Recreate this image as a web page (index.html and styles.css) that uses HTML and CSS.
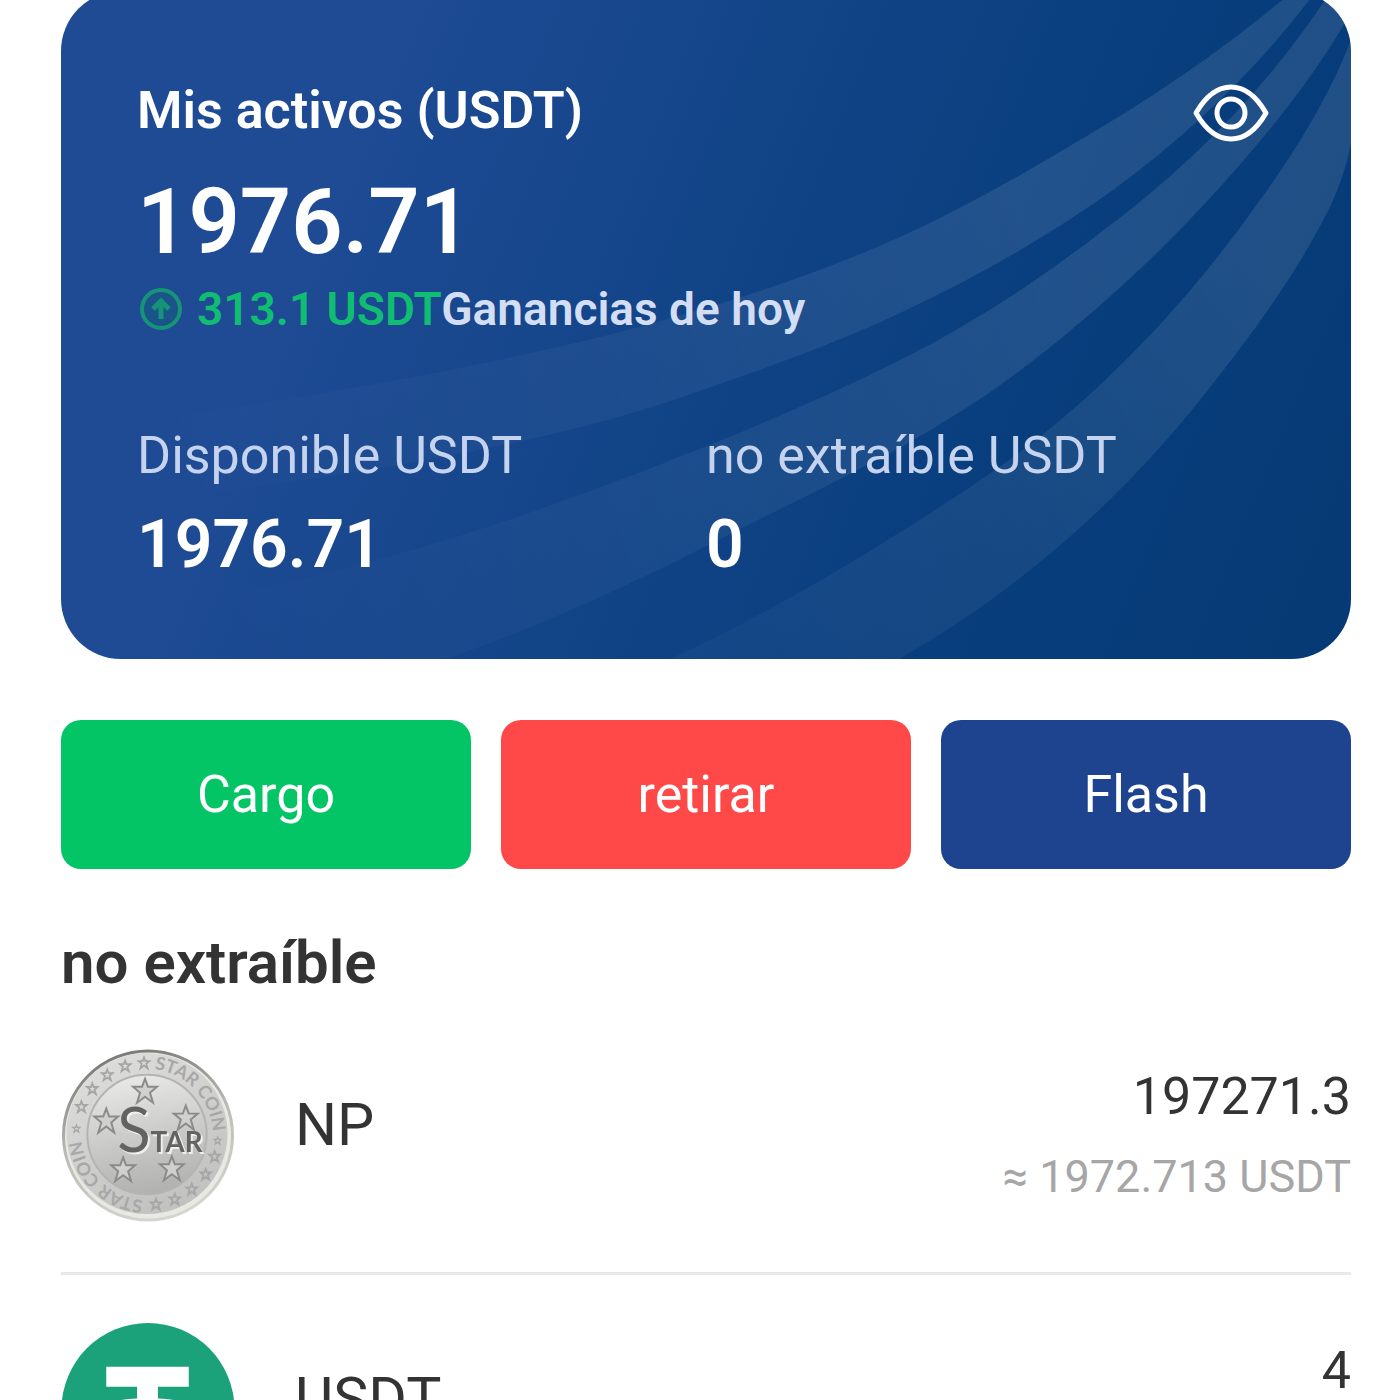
FILE: index.html
```html
<!DOCTYPE html>
<html lang="es">
<head>
<meta charset="utf-8">
<meta name="viewport" content="width=device-width, initial-scale=1">
<title>Mis activos</title>
<link rel="stylesheet" href="styles.css">
</head>
<body>
<main class="page">
  <section class="card">
    <svg class="card-art" viewBox="61 -9 1290 668" preserveAspectRatio="none" aria-hidden="true">
      <defs>
        <linearGradient id="fade" gradientUnits="userSpaceOnUse" x1="200" y1="560" x2="1050" y2="250">
          <stop offset="0" stop-color="#fff" stop-opacity="0"/>
          <stop offset=".4" stop-color="#fff" stop-opacity=".035"/>
          <stop offset="1" stop-color="#fff" stop-opacity=".1"/>
        </linearGradient>
        <linearGradient id="fade-low" gradientUnits="userSpaceOnUse" x1="760" y1="680" x2="1240" y2="270">
          <stop offset="0" stop-color="#fff" stop-opacity=".03"/>
          <stop offset="1" stop-color="#fff" stop-opacity=".1"/>
        </linearGradient>
      </defs>
      <path fill="url(#fade)" d="M1293-9Q1200 70 1080 140C1020 176 960 210 900 237C700 327 440 378 180 415L150 500Q500 460 682 397C757 371 830 346 900 313C975 278 1045 238 1113 190Q1235 100 1316-9Z"/>
      <path fill="url(#fade)" d="M1331-9Q1242 128 1100 233C1035 283 970 325 900 360C790 415 675 460 557 503C420 553 290 585 150 610L120 659H445C545 625 640 580 732 533C815 491 903 451 983 397C1047 353 1105 303 1160 250Q1294 115 1351 12V-9Z"/>
      <path fill="url(#fade-low)" d="M1351 40Q1322 115 1260 200C1208 274 1150 340 1087 397C1030 448 985 478 940 507C850 565 765 615 670 659H899C1020 590 1120 500 1200 400C1250 337 1295 277 1330 207Q1345 175 1351 143Z"/>
    </svg>
    <header class="card-head">
      <h1 class="card-title">Mis activos (USDT)</h1>
      <button class="eye" type="button" aria-label="Ocultar saldo">
        <svg viewBox="0 0 76 60" fill="none" stroke="#fff" stroke-width="5" stroke-linejoin="round">
          <path d="M3 30Q18 4 38 4T73 30Q58 56 38 56T3 30Z"/>
          <circle cx="38" cy="30" r="14"/>
        </svg>
      </button>
    </header>
    <p class="total">1976.71</p>
    <p class="earnings">
      <svg class="up" viewBox="0 0 44 44" fill="none" stroke="#169478" aria-hidden="true">
        <circle cx="22" cy="22" r="19" stroke-width="4" fill="#1a5589"/>
        <path d="M22 32V16M14 22L22 14L30 22" stroke-width="5"/>
      </svg>
      <span><span class="gain">313.1 USDT</span>Ganancias de hoy</span>
    </p>
    <dl class="balances">
      <div>
        <dt>Disponible USDT</dt>
        <dd>1976.71</dd>
      </div>
      <div>
        <dt>no extraíble USDT</dt>
        <dd>0</dd>
      </div>
    </dl>
  </section>

  <div class="actions">
    <button class="action green" type="button">Cargo</button>
    <button class="action red" type="button">retirar</button>
    <button class="action blue" type="button">Flash</button>
  </div>

  <h2 class="section-title">no extraíble</h2>
  <ul class="coins">
    <li class="coin">
      <svg class="coin-icon" viewBox="0 0 174 174" aria-hidden="true">
        <defs>
          <linearGradient id="rim" x1=".3" y1="0" x2=".6" y2="1">
            <stop offset="0" stop-color="#777773"/>
            <stop offset=".5" stop-color="#bcbcb8"/>
            <stop offset="1" stop-color="#d6d6d0"/>
          </linearGradient>
          <linearGradient id="face" x1=".2" y1="0" x2=".7" y2="1">
            <stop offset="0" stop-color="#dededc"/>
            <stop offset=".5" stop-color="#cfcfcd"/>
            <stop offset="1" stop-color="#c0c0bf"/>
          </linearGradient>
          <linearGradient id="disc" x1=".4" y1="0" x2=".6" y2="1">
            <stop offset="0" stop-color="#e8e8e6"/>
            <stop offset=".5" stop-color="#cbcbc9"/>
            <stop offset="1" stop-color="#b0b0af"/>
          </linearGradient>
          <path id="star" d="M0-12L3-4L12-4L5 2L8 12L0 6L-8 12L-5 2L-12-4L-3-4Z"/>
          <path id="arc" d="M20 86A66 66 0 0 1 152 86A66 66 0 0 1 20 86"/>
          <path id="arc-low" d="M86 152A66 66 0 0 1 86 20"/>
        </defs>
        <circle cx="87" cy="87" r="85" fill="#e9e9e4" stroke="url(#rim)" stroke-width="3"/>
        <circle cx="86" cy="85" r="81" fill="url(#face)"/>
        <circle cx="86" cy="86" r="60" fill="url(#disc)" stroke="#b4b4b1" stroke-width="2"/>
        <g class="ring-text">
          <text><textPath href="#arc" startOffset="111">STAR COIN</textPath></text>
          <text><textPath href="#arc-low" startOffset="4">STAR COIN</textPath></text>
        </g>
        <g fill="none" stroke="#a6a6a5" stroke-width="4">
          <use href="#star" transform="translate(15 80) scale(.3)"/>
          <use href="#star" transform="translate(20 58) scale(.45)"/>
          <use href="#star" transform="translate(31 40) scale(.45)"/>
          <use href="#star" transform="translate(46 26) scale(.45)"/>
          <use href="#star" transform="translate(64 17) scale(.45)"/>
          <use href="#star" transform="translate(83 14) scale(.45)"/>
          <use href="#star" transform="translate(157 92) scale(.3)"/>
          <use href="#star" transform="translate(154 108) scale(.45)"/>
          <use href="#star" transform="translate(145 126) scale(.45)"/>
          <use href="#star" transform="translate(131 141) scale(.45)"/>
          <use href="#star" transform="translate(114 151) scale(.45)"/>
          <use href="#star" transform="translate(95 156) scale(.45)"/>
        </g>
        <g fill="#d0d0ce" stroke="#8b8b8a" stroke-width="2">
          <use href="#star" x="84" y="42"/>
          <use href="#star" x="45" y="72"/>
          <use href="#star" x="125" y="69"/>
          <use href="#star" x="62" y="121"/>
          <use href="#star" x="111" y="120"/>
        </g>
        <text class="star-word" x="56" y="104"><tspan class="star-s">S</tspan>TAR</text>
      </svg>
      <span class="coin-name">NP</span>
      <div class="amounts">
        <span class="amount">197271.3</span>
        <span class="approx">≈ 1972.713 USDT</span>
      </div>
    </li>
    <li class="coin">
      <svg class="coin-icon" viewBox="0 0 174 174" aria-hidden="true">
        <circle cx="87" cy="87" r="87" fill="#1ba27a"/>
        <path fill="#fff" d="M45 44H128V64H97V76C120 77 137 82 137 88S120 99 97 100V138H76V100C53 99 36 94 36 88S53 77 76 76V64H45Z"/>
        <path fill="none" stroke="#1ba27a" stroke-width="4" d="M76 80C56 81 42 84 42 87C42 96 131 96 131 87C131 84 117 81 97 80"/>
      </svg>
      <span class="coin-name">USDT</span>
      <div class="amounts">
        <span class="amount">4</span>
      </div>
    </li>
  </ul>
</main>
</body>
</html>
```
FILE: styles.css
```css
* {
  box-sizing: border-box;
}

body {
  margin: 0;
  background: #fff;
  color: #333;
  font-family: Roboto, "Liberation Sans", sans-serif;
}

h1, h2, p, dl, dd, ul {
  margin: 0;
  padding: 0;
}

button {
  border: 0;
  font: inherit;
  color: #fff;
  cursor: pointer;
}

.page {
  display: flow-root;
  height: 100vh;
  overflow: hidden;
  padding: 0 49px 0 61px;
}

.card {
  position: relative;
  overflow: hidden;
  margin-top: -9px;
  padding: 84px 76px 74px;
  border-radius: 60px;
  color: #fff;
  background: linear-gradient(112deg, #1f4b95 0%, #1e4b94 22%, #16468c 40%, #0e4284 56%, #073d7b 78%, #053a74 100%);
}

.card-art {
  position: absolute;
  inset: 0;
  width: 100%;
  height: 100%;
}

.card-head,
.total,
.earnings,
.balances {
  position: relative;
}

.card-head {
  display: flex;
  justify-content: space-between;
  height: 76px;
}

.card-title {
  font-size: 52px;
  line-height: 72px;
  font-weight: 600;
}

.eye {
  align-self: center;
  width: 76px;
  height: 60px;
  margin-right: 6px;
  padding: 0;
  background: none;
}

.eye svg,
.up {
  display: block;
}

.total {
  padding-top: 20px;
  font-size: 90px;
  line-height: 104px;
  font-weight: 600;
}

.earnings {
  display: flex;
  align-items: center;
  gap: 14px;
  height: 68px;
  color: #d3def5;
  font-size: 46px;
  line-height: 60px;
  font-weight: 600;
}

.up {
  width: 44px;
  height: 44px;
  margin-left: 2px;
}

.gain {
  color: #10bd72;
}

.balances {
  display: grid;
  grid-template-columns: 1fr 1fr;
  padding-top: 76px;
}

.balances dt {
  color: #c5d3ef;
  font-size: 52px;
  line-height: 74px;
}

.balances dd {
  font-size: 66px;
  line-height: 80px;
  padding-top: 12px;
  font-weight: 600;
}

.actions {
  display: grid;
  grid-template-columns: repeat(3, 1fr);
  gap: 30px;
  margin-top: 61px;
}

.action {
  height: 149px;
  border-radius: 20px;
  font-size: 52px;
}

.green {
  background: #03c566;
}

.red {
  background: #ff4948;
}

.blue {
  background: #1e448f;
}

.section-title {
  padding: 58px 0 2px;
  font-size: 60px;
  line-height: 72px;
  font-weight: 600;
}

.coins {
  list-style: none;
}

.coin {
  display: flex;
  gap: 60px;
  padding: 48px 0 50px;
  border-bottom: 3px solid #e9e9e9;
}

.coin-icon {
  flex: none;
  width: 174px;
  height: 173px;
}

.coin-name {
  flex: 1;
  padding-top: 36px;
  font-size: 59px;
  line-height: 80px;
}

.amounts {
  display: flex;
  flex-direction: column;
  gap: 12px;
  padding-top: 12px;
  text-align: right;
}

.amount {
  font-size: 52px;
  line-height: 72px;
}

.approx {
  color: #a6a6a6;
  font-size: 45px;
  line-height: 64px;
}

.ring-text {
  fill: #a8a8a7;
  font: 700 18px Lato, sans-serif;
}

.star-word {
  fill: #636362;
  font: 700 28px Lato, sans-serif;
  filter: drop-shadow(2px 2px 0 #efefed);
}

.star-s {
  font-size: 62px;
  font-weight: 400;
}
```
